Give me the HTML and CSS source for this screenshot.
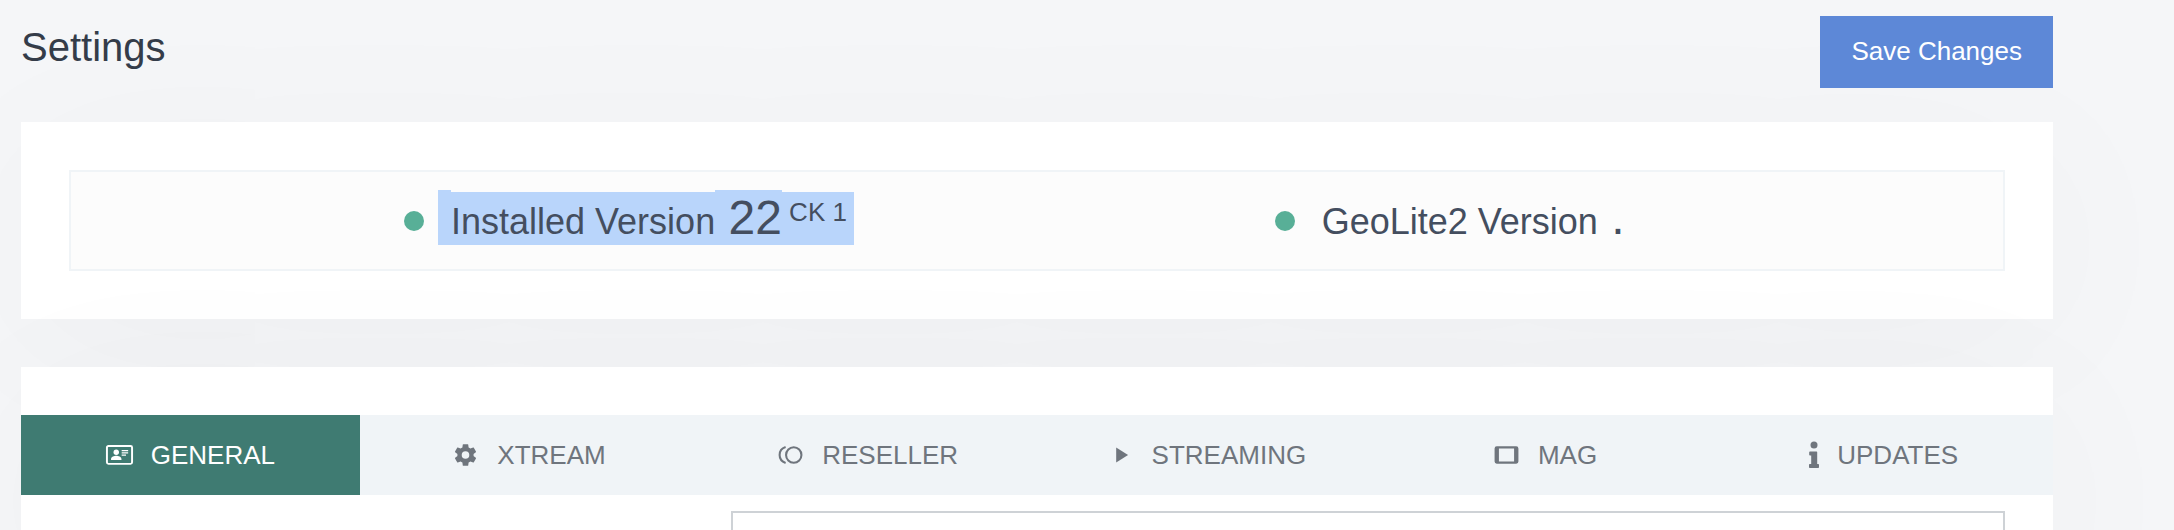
FILE: index.html
```html
<!DOCTYPE html>
<html lang="en">
<head>
  <meta charset="UTF-8">
  <meta name="viewport" content="width=device-width, initial-scale=1.0">
  <title>Settings</title>
  <link rel="stylesheet" href="styles.css">
</head>
<body>
<form class="container">
  <div class="page-header">
    <h1>Settings</h1>
    <button type="submit" class="save-button">Save Changes</button>
  </div>

  <div class="card version-card">
    <div class="versions">
      <div class="version">
        <span class="dot"></span>
        <div class="version-text selected">
          <span class="spacer"></span>
          <span class="label">Installed Version</span>
          <span class="number"> 22</span>
          <span class="build"> CK 1 </span>
        </div>
      </div>
      <div class="version">
        <span class="dot"></span>
        <div class="version-text">
          <span class="spacer"></span>
          <span class="label">GeoLite2 Version</span>
          <span class="number"> .</span>
        </div>
      </div>
    </div>
  </div>

  <div class="card settings-card">
    <nav class="tabs">
      <a href="#general" class="tab active">
        <svg class="icon" viewBox="0 0 24 24">
          <rect x="0.4" y="3.6" width="23.2" height="16.6" rx="1.4" fill="none" stroke="currentColor" stroke-width="1.8"/>
          <circle cx="9" cy="9.5" r="2.500"/>
          <path d="M4.200 16.500v-.8c0-1.900 3-2.900 4.800-2.900s4.800 1 4.800 2.900v.8zM14 7.400h6v1.200h-6zM14 9.500h6v1.200h-6zM14 11.600h4v1.200h-4z"/>
        </svg>
        <span>GENERAL</span>
      </a>
      <a href="#xtream" class="tab">
        <svg class="icon" viewBox="0 0 24 24">
          <path d="M12 15.5A3.5 3.5 0 0 1 8.500 12 3.500 3.500 0 0 1 12 8.500a3.500 3.500 0 0 1 3.500 3.500 3.500 3.500 0 0 1-3.500 3.500m7.430-2.530c.04-.32.07-.64.07-.97s-.03-.66-.07-1l2.110-1.630c.19-.15.24-.42.12-.64l-2-3.460c-.12-.22-.39-.31-.61-.22l-2.490 1c-.52-.39-1.060-.73-1.690-.98l-.37-2.650A.506.506 0 0 0 14 2h-4c-.25 0-.46.18-.5.42l-.37 2.650c-.63.25-1.170.59-1.690.98l-2.490-1c-.22-.09-.49 0-.61.22l-2 3.460c-.13.22-.07.49.12.64L4.570 11c-.04.34-.07.67-.07 1s.03.65.07.97l-2.110 1.660c-.19.15-.25.42-.12.64l2 3.460c.12.22.39.3.61.22l2.490-1.010c.52.4 1.060.74 1.690.99l.37 2.650c.04.24.25.42.5.42h4c.25 0 .46-.18.5-.42l.37-2.650c.63-.26 1.170-.59 1.690-.99l2.490 1.010c.22.08.49 0 .61-.22l2-3.460c.12-.22.07-.49-.12-.64z"/>
        </svg>
        <span>XTREAM</span>
      </a>
      <a href="#reseller" class="tab">
        <svg class="icon" viewBox="0 0 24 24">
          <g fill="none" stroke="currentColor" stroke-width="1.9">
            <circle cx="15" cy="12" r="7.1"/>
            <path d="M7.500 4.700C3.600 6 1.950 9 1.950 12s1.650 6 5.550 7.300"/>
          </g>
        </svg>
        <span>RESELLER</span>
      </a>
      <a href="#streaming" class="tab">
        <svg class="icon" viewBox="0 0 24 24">
          <path d="M8 5.100v13.800L19 12z"/>
        </svg>
        <span>STREAMING</span>
      </a>
      <a href="#mag" class="tab">
        <svg class="icon" viewBox="0 0 24 24">
          <path fill-rule="evenodd" d="M3 4h18a2 2 0 0 1 2 2v12a2 2 0 0 1-2 2H3a2 2 0 0 1-2-2V6a2 2 0 0 1 2-2zM5 6v12h14V6z"/>
        </svg>
        <span>MAG</span>
      </a>
      <a href="#updates" class="tab">
        <svg class="icon icon-info" viewBox="0 0 10 28">
          <circle cx="5" cy="4" r="3.500"/>
          <path d="M1 10.500h6.500a.7.7 0 0 1 .7.7V23h1a.8.8 0 0 1 .8.8v2.400a.8.8 0 0 1-.8.8H.8a.8.8 0 0 1-.8-.8v-2.400a.8.8 0 0 1 .8-.8h1.400v-8.500H1a.8.8 0 0 1-.8-.8v-2.400a.8.8 0 0 1 .8-.8z"/>
        </svg>
        <span>UPDATES</span>
      </a>
    </nav>
    <div class="fields">
      <input type="text" class="field" aria-label="Server name">
    </div>
  </div>
</form>
</body>
</html>
```
FILE: styles.css
```css
* {
  box-sizing: border-box;
}

body {
  margin: 0;
  font-family: "Liberation Sans", Arial, sans-serif;
  font-size: 26px;
  background: #f5f6f8;
  color: #444e5f;
  overflow: hidden;
}

.container {
  margin: 0 121px 0 21px;
}

.page-header {
  display: flex;
  justify-content: space-between;
  align-items: flex-start;
  padding: 16px 0 34px;
}

h1 {
  margin: 7px 0 0;
  font-size: 40px;
  line-height: 48px;
  font-weight: 400;
  color: #343c49;
}

.save-button {
  height: 72px;
  padding: 0 31px 2px;
  border: none;
  background: #5d88d7;
  color: #fff;
  font-family: inherit;
  font-size: 26px;
  cursor: pointer;
}

.card {
  background: #fff;
  box-shadow: 0 24px 180px rgba(0, 0, 0, 0.03);
}

.version-card {
  padding: 48px;
  margin-bottom: 48px;
}

/* version bar */
.versions {
  display: flex;
  gap: 26.3%;
  height: 101px;
  padding: 18px 0 0 17.2%;
  border: 2px solid #f0f4f7;
  background: #fcfcfc;
}

.version {
  display: flex;
  align-items: flex-start;
  white-space: nowrap;
}

.dot {
  width: 20px;
  height: 20px;
  margin: 21px 14px 0 0;
  border-radius: 50%;
  background: #58af97;
}

.version-text {
  display: flex;
  align-items: flex-end;
  white-space: pre;
}

.spacer {
  width: 13px;
  height: 55px;
}

.label {
  padding-top: 6px;
  font-size: 36px;
  line-height: 47px;
}

.number {
  font-size: 48px;
  line-height: 55px;
}

.build {
  padding-bottom: 13px;
  line-height: 40px;
}

.selected span {
  background: #b9d5fb;
}

/* tabs */
.settings-card {
  padding-top: 48px;
}

.tabs {
  display: flex;
  background: #f0f4f7;
}

.tab {
  flex: 1 1 0;
  display: flex;
  justify-content: center;
  align-items: center;
  gap: 18px;
  height: 80px;
  color: #6f757d;
  text-decoration: none;
}

.tab.active {
  background: #3f7b72;
  color: #fff;
}

.icon {
  width: 27px;
  height: 26px;
  fill: currentColor;
  overflow: visible;
}

.icon-info {
  width: 10px;
  height: 28px;
}

.fields {
  padding: 16px 48px 0;
}

.field {
  display: block;
  width: 65.8%;
  height: 76px;
  margin-left: auto;
  padding: 0 24px;
  border: 2px solid #ced2d6;
  background: #fff;
  font-family: inherit;
  font-size: 26px;
}
```
